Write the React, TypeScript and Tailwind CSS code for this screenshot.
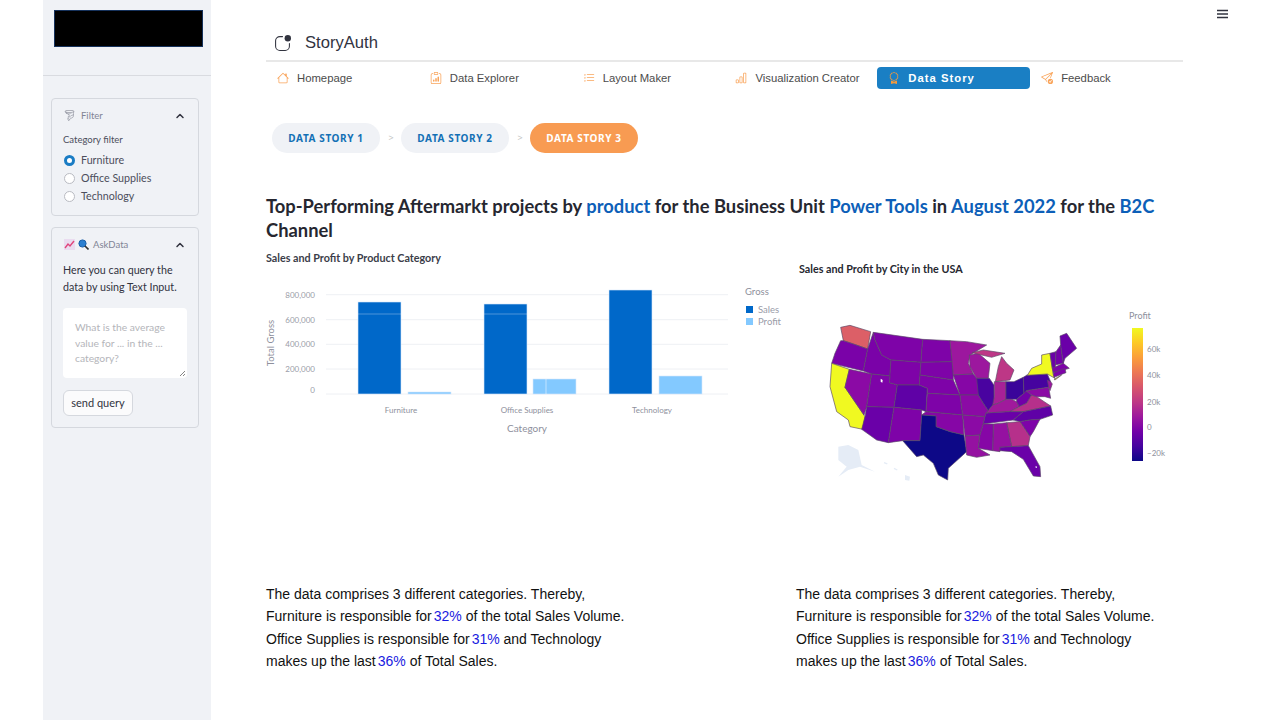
import { ChevronUp } from "lucide-react";
import {
	BsAppIndicator,
	BsAward,
	BsBarChart,
	BsClipboardData,
	BsHouse,
	BsListTask,
	BsSendCheck,
	BsTornado,
} from "react-icons/bs";

const sans = "font-['Lato',sans-serif]";

const navItems = [
	{ label: "Homepage", icon: BsHouse },
	{ label: "Data Explorer", icon: BsClipboardData },
	{ label: "Layout Maker", icon: BsListTask },
	{ label: "Visualization Creator", icon: BsBarChart },
	{ label: "Data Story", icon: BsAward, active: true },
	{ label: "Feedback", icon: BsSendCheck },
];

const states = [
	{ c: "#dc5f67", p: "92,82 120,76 182,95 173,147 130,132 100,122" },
	{ c: "#7a02a8", p: "100,122 130,132 173,147 160,213 65,190 75,160 92,122" },
	{ c: "#f0f921", p: "65,190 118,208 105,262 165,350 158,388 120,380 115,360 80,335 60,260" },
	{ c: "#8b0aa5", p: "118,208 185,222 170,320 162,345 105,262" },
	{ c: "#7a02a8", p: "190,97 173,147 160,213 185,222 240,228 243,180 215,165 195,120" },
	{ c: "#7e03a8", p: "190,97 338,118 333,187 243,180 215,165 195,120" },
	{ c: "#7e03a8", p: "243,180 333,187 328,255 262,255 238,248" },
	{ c: "#7e03a8", p: "185,222 240,228 238,248 262,255 252,322 170,320" },
	{ c: "#5f01a6", p: "262,255 328,255 352,265 348,335 335,330 252,322" },
	{ c: "#6a00a8", p: "170,320 252,322 235,428 200,420 155,388 165,350" },
	{ c: "#7e03a8", p: "252,322 335,330 335,345 330,422 278,422 235,428" },
	{ c: "#7e03a8", p: "338,118 420,122 428,185 333,187" },
	{ c: "#7e03a8", p: "333,187 428,185 430,225 430,240 330,225" },
	{ c: "#7e03a8", p: "330,225 430,240 450,285 352,280 352,265 328,255" },
	{ c: "#7e03a8", p: "352,280 450,285 458,345 348,335" },
	{ c: "#8606a6", p: "348,335 458,345 462,405 420,395 378,380 378,348 335,345" },
	{ c: "#0d0887", p: "335,345 378,348 378,380 420,395 462,405 470,455 415,505 413,540 385,525 370,490 340,465 320,470 278,422 330,422" },
	{ c: "#9c179e", p: "420,122 470,125 530,135 480,165 475,190 490,222 430,225" },
	{ c: "#8606a6", p: "430,225 490,222 500,235 515,262 505,285 450,285" },
	{ c: "#8b0aa5", p: "450,285 505,285 520,310 535,332 528,340 525,350 458,345" },
	{ c: "#8b0aa5", p: "458,345 525,350 520,372 510,405 465,408" },
	{ c: "#9511a1", p: "465,408 510,405 505,445 540,465 500,472 470,465" },
	{ c: "#9c179e", p: "478,165 505,160 540,190 535,235 500,235 480,200" },
	{ c: "#4903a0", p: "500,235 538,235 552,255 553,310 535,332 520,310 505,285" },
	{ c: "#bd3786", p: "487,158 520,150 585,160 545,172 515,165" },
	{ c: "#bd3786", p: "556,245 565,200 575,170 590,190 612,210 600,240" },
	{ c: "#a72197", p: "553,245 588,245 588,298 565,310 548,315 553,290" },
	{ c: "#3a049a", p: "588,245 612,245 640,232 642,280 620,298 605,298 588,298" },
	{ c: "#a01a9c", p: "535,332 548,315 565,310 588,298 605,298 620,305 628,320 600,335 545,338 528,340" },
	{ c: "#7201a8", p: "620,298 642,280 648,272 665,285 650,310 628,320 620,305" },
	{ c: "#b6308b", p: "600,335 628,320 650,310 665,285 680,290 722,318 640,335" },
	{ c: "#6a00a8", p: "525,350 528,340 545,338 600,335 640,335 610,360 520,372" },
	{ c: "#5f01a6", p: "640,335 722,318 728,345 690,358 660,360 630,365 610,360" },
	{ c: "#7e03a8", p: "630,365 660,360 690,358 670,395 660,410" },
	{ c: "#b6308b", p: "590,368 630,365 660,410 655,437 605,440" },
	{ c: "#9511a1", p: "550,372 590,368 605,440 570,442 570,455 548,452" },
	{ c: "#8606a6", p: "520,372 550,372 548,452 505,445 510,405" },
	{ c: "#6a00a8", p: "570,442 605,440 655,437 690,500 692,530 670,528 640,478 605,455 570,452" },
	{ c: "#46039f", p: "640,232 650,226 712,222 722,245 716,262 650,272 642,280" },
	{ c: "#f0f921", p: "652,226 665,205 695,192 695,165 720,160 730,225 735,235 712,222 650,226" },
	{ c: "#9c179e", p: "712,240 722,245 727,252 720,272 716,262" },
	{ c: "#8b0aa5", p: "648,272 716,262 722,295 705,290 680,290 665,285" },
	{ c: "#6a00a8", p: "720,160 738,155 736,205 727,205" },
	{ c: "#7201a8", p: "738,155 752,135 760,190 736,195" },
	{ c: "#7e03a8", p: "727,205 760,190 778,205 730,218" },
	{ c: "#7e03a8", p: "730,218 765,205 768,218 732,232" },
	{ c: "#f0f921", p: "732,238 755,225 735,240" },
	{ c: "#6a00a8", p: "752,135 750,108 770,100 800,145 765,175 760,190" },
];

function FilterCard() {
	return (
		<div className="h-[118px] rounded border border-[#d5d8de] px-[11px] pt-[9px]">
			<div className="flex items-center justify-between pr-[1px] text-[#808495]">
				<div className="flex items-center gap-[6px] pl-[1px] text-[9.5px] leading-[15px]">
					<BsTornado size={11} className="text-[#9a9da8]" />
					<span>Filter</span>
				</div>
				<ChevronUp size={12} strokeWidth={3} className="text-[#31333f]" />
			</div>
			<p className="mt-[9px] text-[9.5px] leading-[15px] text-[#4c4e5c]">Category filter</p>
			<div className="mt-[6px] flex flex-col gap-[3px]">
				{["Furniture", "Office Supplies", "Technology"].map((item, index) => (
					<div key={item} className="flex h-[15px] items-center gap-[5px] pl-[1px] text-[10.7px] text-[#4c4e5c]">
						{index === 0 ? (
							<span className="h-[11px] w-[11px] rounded-full border-[3.5px] border-[#1a7cc4] bg-white" />
						) : (
							<span className="h-[11px] w-[11px] rounded-full border border-[#b9bbc2] bg-white" />
						)}
						<span className="ml-[1px]">{item}</span>
					</div>
				))}
			</div>
		</div>
	);
}

function AskCard() {
	return (
		<div className="mt-[11px] h-[201px] rounded border border-[#d5d8de] px-[11px] pt-[9px]">
			<div className="flex items-center justify-between pr-[1px] text-[#808495]">
				<div className="flex items-center gap-[3px] pl-[1px] text-[9.5px] leading-[15px]">
					<svg width="11" height="11" viewBox="0 0 11 11">
						<rect width="11" height="11" fill="#eadcf0" />
						<path d="M1 9L4 5L6 7L10 2" stroke="#e0457b" strokeWidth="1.4" fill="none" />
					</svg>
					<svg width="11" height="11" viewBox="0 0 11 11">
						<circle cx="4.5" cy="4.5" r="3.6" fill="#2b7fd0" stroke="#1a5fa8" />
						<path d="M7 7L10.5 10.5" stroke="#333" strokeWidth="1.6" />
					</svg>
					<span className="ml-[1px]">AskData</span>
				</div>
				<ChevronUp size={12} strokeWidth={3} className="text-[#31333f]" />
			</div>
			<p className="mt-[9px] text-[10.7px] leading-[17px] text-[#31333f]">
				Here you can query the data by using Text Input.
			</p>
			<div className="relative mt-[13px] h-[70px] w-[124px] rounded bg-white px-3 pt-[12px] text-[10.3px] leading-[15.5px] text-[#b4b5ba]">
				What is the average value for ... in the ... category?
				<svg className="absolute right-[1px] bottom-[1px]" width="7" height="7" viewBox="0 0 7 7">
					<path d="M1 6L6 1M4 6L6 4" stroke="#666" strokeWidth="0.8" />
				</svg>
			</div>
			<button
				type="button"
				className="mt-[12px] h-[26px] w-[70px] rounded-md border border-[#d5d8de] bg-[#fbfbfc] text-[11px] text-[#31333f]"
			>
				send query
			</button>
		</div>
	);
}

function BarChart() {
	const gridY = [49.7, 74.7, 99.3, 124, 149];
	const labels = ["800,000", "600,000", "400,000", "200,000", "0"];
	const bars = [
		{ x: 98, top: 57, fill: "#0068c9" },
		{ x: 148, top: 147, fill: "#83c9ff" },
		{ x: 224, top: 59, fill: "#0068c9" },
		{ x: 273, top: 134, fill: "#83c9ff" },
		{ x: 349, top: 45, fill: "#0068c9" },
		{ x: 399, top: 131, fill: "#83c9ff" },
	];

	return (
		<svg width="530" height="165" viewBox="6 30 530 165" className="mt-[9px] block font-['Lato',sans-serif]">
			{gridY.map((y) => (
				<line key={y} x1="66" x2="468" y1={y} y2={y} stroke="#eef0f4" />
			))}
			{labels.map((label, i) => (
				<text key={label} x="55" y={gridY[i] + (i === 4 ? -1 : 3)} textAnchor="end" fontSize="8" fill="#9a9ca8">
					{label}
				</text>
			))}
			{bars.map((bar) => (
				<rect
					key={bar.x}
					x={bar.x}
					y={bar.top}
					width="43"
					height={149 - bar.top}
					fill={bar.fill}
					stroke="#d6e8fa"
					strokeWidth="0.6"
				/>
			))}
			<line x1="98" x2="141" y1="69" y2="69" stroke="#ffffff" strokeOpacity="0.3" />
			<line x1="224" x2="267" y1="69" y2="69" stroke="#ffffff" strokeOpacity="0.3" />
			<line x1="286" x2="286" y1="134" y2="149" stroke="#ffffff" strokeOpacity="0.5" />
			<text x="141" y="168" textAnchor="middle" fontSize="8" fill="#8e909c">Furniture</text>
			<text x="267" y="168" textAnchor="middle" fontSize="8" fill="#8e909c">Office Supplies</text>
			<text x="392" y="168" textAnchor="middle" fontSize="8" fill="#8e909c">Technology</text>
			<text x="267" y="187" textAnchor="middle" fontSize="10" fill="#8e909c">Category</text>
			<text transform="translate(14 98) rotate(-90)" textAnchor="middle" fontSize="9.5" fill="#8e909c">Total Gross</text>
			<text x="485" y="50" fontSize="9.5" fill="#8e909c">Gross</text>
			<rect x="486" y="61" width="7" height="7" fill="#0068c9" />
			<text x="498" y="68" fontSize="9.5" fill="#9a9ca8">Sales</text>
			<rect x="486" y="73" width="7" height="7" fill="#83c9ff" />
			<text x="498" y="80" fontSize="9.5" fill="#9a9ca8">Profit</text>
		</svg>
	);
}

function MapChart() {
	const ticks = [
		{ y: 70, t: "60k" },
		{ y: 96, t: "40k" },
		{ y: 123, t: "20k" },
		{ y: 148, t: "0" },
		{ y: 174, t: "−20k" },
	];

	return (
		<svg width="387" height="210" viewBox="0 0 387 210" className="mt-[5px] block font-['Lato',sans-serif]">
			<defs>
				<linearGradient id="plasma" x1="0" y1="1" x2="0" y2="0">
					<stop offset="0" stopColor="#0d0887" />
					<stop offset="0.11" stopColor="#46039f" />
					<stop offset="0.22" stopColor="#7201a8" />
					<stop offset="0.33" stopColor="#9c179e" />
					<stop offset="0.44" stopColor="#bd3786" />
					<stop offset="0.56" stopColor="#d8576b" />
					<stop offset="0.67" stopColor="#ed7953" />
					<stop offset="0.78" stopColor="#fb9f3a" />
					<stop offset="0.89" stopColor="#fdca26" />
					<stop offset="1" stopColor="#f0f921" />
				</linearGradient>
			</defs>
			<g transform="translate(14 18) scale(0.3333)">
				<path
					d="M85 440L115 435L145 450L155 495L195 515L150 500L115 510L85 530L110 500L85 480Z"
					fill="#e5ecf6"
				/>
				<path d="M285 525L300 530L298 542L285 540Z" fill="#e5ecf6" />
				<path d="M222 488L232 492M252 505L262 510" stroke="#e5ecf6" strokeWidth="4" />
				{states.map((state) => (
					<polygon
						key={state.p}
						points={state.p}
						fill={state.c}
						stroke="#5a4a68"
						strokeWidth="2"
						strokeLinejoin="round"
					/>
				))}
				<path d="M212 236L218 240L217 248L212 245Z" fill="#ffffff" />
				<path d="M677 498L681 500L680 504L677 503Z" fill="#ffffff" />
			</g>
			<text x="333" y="37" fontSize="9" fill="#8e909c">Profit</text>
			<rect x="336" y="46" width="11" height="133" fill="url(#plasma)" />
			{ticks.map((tick) => (
				<text key={tick.t} x="351" y={tick.y} fontSize="8" fill="#8e909c">
					{tick.t}
				</text>
			))}
		</svg>
	);
}

function Summary() {
	return (
		<p className="font-['Liberation_Sans',sans-serif] text-[14px] leading-[22.3px] text-[#111]">
			The data comprises 3 different categories. Thereby,
			<br />
			Furniture is responsible for<span className="ml-[2px] text-[#1a1ae0]">32%</span> of the total Sales Volume.
			<br />
			Office Supplies is responsible for<span className="ml-[2px] text-[#1a1ae0]">31%</span> and Technology
			<br />
			makes up the last<span className="ml-[2px] text-[#1a1ae0]">36%</span> of Total Sales.
		</p>
	);
}

export default function App() {
	return (
		<main className={`relative flex h-[720px] w-[1280px] overflow-hidden bg-white pl-[43px] ${sans}`}>
			<aside className="h-full w-[168px] shrink-0 bg-[#f0f2f6]">
				<div className="h-[76px] border-b border-[#d9dbe0] px-[11px] pt-[10px]">
					<div className="h-[37px] w-[149px] border border-[#16325c] bg-black" />
				</div>
				<div className="pt-[22px] pr-[12px] pl-[8px]">
					<FilterCard />
					<AskCard />
				</div>
			</aside>

			<svg className="absolute top-[9px] right-[52px] text-[#31333f]" width="11" height="10" viewBox="0 0 11 10">
				<path d="M0 1.5H11M0 5H11M0 8.5H11" stroke="currentColor" strokeWidth="1.4" />
			</svg>

			<section className="ml-[55px] w-[917px] pt-[30px]">
				<div className="flex h-[32px] items-center border-b-2 border-[#e8e8e8] pb-[4px] pl-[8px] font-['Liberation_Sans',sans-serif]">
					<BsAppIndicator size={17} className="text-[#31333f]" />
					<span className="ml-[14px] text-[16.6px] text-[#31333f]">StoryAuth</span>
				</div>

				<nav className="mt-[5px] grid grid-cols-6 font-['Liberation_Sans',sans-serif]">
					{navItems.map((item) => (
						<div
							key={item.label}
							className={`flex h-[22px] items-center rounded pl-[11px] text-[11.3px] ${
								item.active ? "bg-[#1a7fc4] font-bold tracking-[1px] text-white" : "text-[#4c4c4c]"
							}`}
						>
							<item.icon size={12} className={item.active ? "text-[#f59a3c]" : "text-[#f9a45a]"} />
							<span className="ml-[8px]">{item.label}</span>
						</div>
					))}
				</nav>

				<div className="mt-[34px] ml-[6px] flex items-center font-['Noto_Sans',sans-serif]">
					{["DATA STORY 1", "DATA STORY 2", "DATA STORY 3"].map((label, index) => (
						<div key={label} className="flex items-center">
							{index > 0 && <span className="w-[21px] pl-[1px] text-center text-[9px] text-[#c4c4c4]">&gt;</span>}
							<div
								className={`flex h-[30px] w-[108px] items-center justify-center rounded-full text-[10px] font-bold tracking-[0.6px] ${
									index === 2 ? "bg-[#f89b52] text-white" : "bg-[#f0f2f6] text-[#1370b5]"
								}`}
							>
								{label}
							</div>
						</div>
					))}
				</div>

				<h1 className="mt-[41px] text-[18.35px] leading-[24px] font-bold text-[#262730]">
					Top-Performing Aftermarkt projects by <span className="text-[#0d5fb8]">product</span> for the Business Unit{" "}
					<span className="text-[#0d5fb8]">Power Tools</span> in <span className="text-[#0d5fb8]">August 2022</span> for
					the <span className="text-[#0d5fb8]">B2C</span> Channel
				</h1>

				<div className="mt-[8px] grid grid-cols-[530px_387px]">
					<div>
						<h2 className="text-[10.75px] leading-[16px] font-bold text-[#3b3d49]">Sales and Profit by Product Category</h2>
						<BarChart />
					</div>
					<div className="pt-[11px]">
						<h2 className="ml-[3px] text-[10.75px] leading-[16px] font-bold text-[#262730]">Sales and Profit by City in the USA</h2>
						<MapChart />
					</div>
				</div>

				<div className="mt-[91px] grid grid-cols-[530px_387px]">
					<Summary />
					<Summary />
				</div>
			</section>
		</main>
	);
}
